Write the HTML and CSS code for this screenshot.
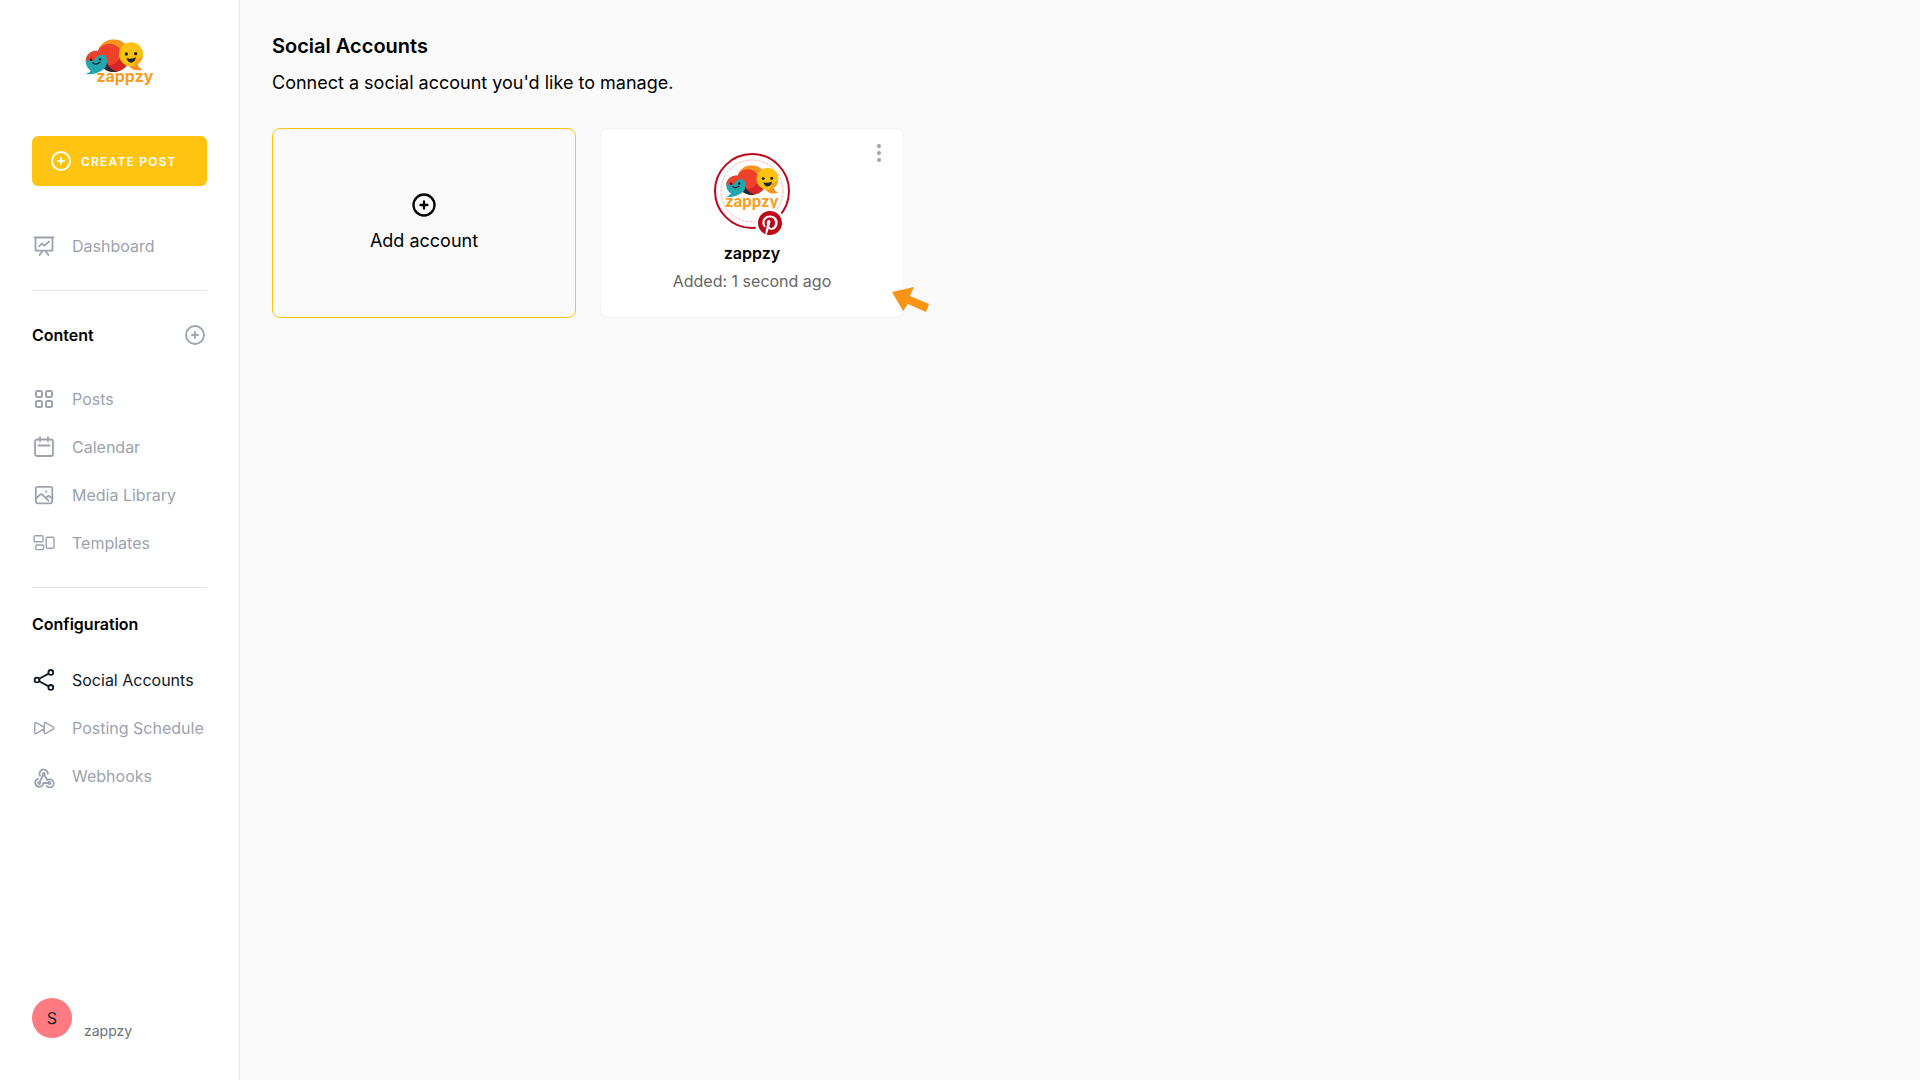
FILE: index.html
```html
<!DOCTYPE html>
<html lang="en">
<head>
  <meta charset="UTF-8">
  <meta name="viewport" content="width=device-width, initial-scale=1.0">
  <title>Social Accounts - zappzy</title>
  <link rel="stylesheet" href="styles.css">
</head>
<body>
  <svg class="sprite" aria-hidden="true">
    <symbol id="plus-circle" viewBox="0 0 24 24">
      <circle cx="12" cy="12" r="9"/>
      <path d="M12 9v6M9 12h6"/>
    </symbol>
    <symbol id="bubbles" viewBox="0 0 180 112">
      <clipPath id="big"><circle cx="89" cy="53" r="49"/></clipPath>
      <clipPath id="teal"><circle cx="37" cy="70" r="32"/></clipPath>
      <clipPath id="yellow"><circle cx="141" cy="49" r="36"/></clipPath>
      <g clip-path="url(#big)">
        <rect x="40" y="4" width="100" height="100" fill="#f7941d"/>
        <circle cx="76" cy="56" r="39" fill="#ef4129"/>
        <path d="M66 84q38-2 44-32l34 6v54H60z" fill="#d9242a"/>
        <path d="M62 58q10 38 38 43l-8 11H48V84z" fill="#272a33"/>
      </g>
      <path d="M60 84q-6 20-34 24-11 2-21-1 13-2 16-12z" fill="#22a6b0"/>
      <g clip-path="url(#teal)">
        <rect x="4" y="36" width="70" height="70" fill="#22a6b0"/>
        <path d="M4 68h26q7-20 34-17V36H4z" fill="#ef4129"/>
      </g>
      <path d="M134 82q9 20 43 13-14-3-16-20z" fill="#f7941d"/>
      <g clip-path="url(#yellow)">
        <rect x="104" y="12" width="74" height="74" fill="#fec20f"/>
        <path d="M178 50q-5 12-22 12-2 14-12 25h34z" fill="#f7a41d"/>
      </g>
      <g fill="#20242c">
        <circle cx="21" cy="65" r="4"/>
        <circle cx="48" cy="64" r="4"/>
        <circle cx="127" cy="48" r="5"/>
        <circle cx="155" cy="47" r="5"/>
        <path d="M127 60q14 5 29-2-2 15-14 16-11 0-15-14z"/>
      </g>
      <path d="M26 74q10 9 21-1" fill="none" stroke="#20242c" stroke-width="4" stroke-linecap="round"/>
    </symbol>
  </svg>

  <div class="app">
    <aside class="sidebar">
      <a href="#" class="logo" aria-label="Home">
        <svg viewBox="0 0 216 150">
          <use href="#bubbles" width="180" height="112"/>
          <text x="37" y="133" class="logo-text">zappzy</text>
        </svg>
      </a>

      <button type="button" class="create-post">
        <svg class="icon bold"><use href="#plus-circle"/></svg>
        Create post
      </button>

      <nav class="nav">
        <a href="#" class="nav-link">
          <svg class="icon" viewBox="0 0 24 24"><path d="M2.5 3.5h19M3.5 3.5v13.2h17V3.5M10.5 17l-3 4M13.5 17l3 4M7 12.5l2.8-3 2.7 2.2 4.5-4.2"/></svg>
          Dashboard
        </a>
      </nav>

      <hr class="divider">

      <div class="nav-heading">
        <h2>Content</h2>
        <button type="button" class="heading-add" aria-label="Add content">
          <svg class="icon"><use href="#plus-circle"/></svg>
        </button>
      </div>
      <nav class="nav">
        <a href="#" class="nav-link">
          <svg class="icon bold" viewBox="0 0 24 24"><rect x="4" y="4" width="6" height="6" rx="1.5"/><rect x="14" y="4" width="6" height="6" rx="1.5"/><rect x="4" y="14" width="6" height="6" rx="1.5"/><rect x="14" y="14" width="6" height="6" rx="1.5"/></svg>
          Posts
        </a>
        <a href="#" class="nav-link">
          <svg class="icon" viewBox="0 0 24 24"><rect x="3" y="4.5" width="18" height="16.5" rx="2"/><path d="M8 2.2v4M16 2.2v4M6.5 10.5h11"/></svg>
          Calendar
        </a>
        <a href="#" class="nav-link">
          <svg class="icon" viewBox="0 0 24 24"><rect x="3.8" y="3.8" width="16.5" height="16.5" rx="2"/><path d="M4 15.5l3.8-3.6q1.4-1.2 2.8 0l6 6M14 14.8l1.2-1.2q1.4-1.2 2.8 0l2.3 2.2M14 8.5h.4"/></svg>
          Media Library
        </a>
        <a href="#" class="nav-link">
          <svg class="icon thin" viewBox="0 0 24 24"><rect x="2.2" y="4.8" width="8.8" height="6" rx="1"/><rect x="3.8" y="14" width="7.8" height="4.6" rx="1"/><rect x="14.2" y="6.2" width="7.8" height="11" rx="1"/></svg>
          Templates
        </a>
      </nav>

      <hr class="divider">

      <div class="nav-heading short">
        <h2>Configuration</h2>
      </div>
      <nav class="nav">
        <a href="#" class="nav-link active">
          <svg class="icon" viewBox="0 0 24 24"><circle cx="5" cy="12" r="2.4"/><circle cx="18.8" cy="4.4" r="2.4"/><circle cx="18.8" cy="19.4" r="2.4"/><path d="M7.2 10.8l9.4-5.2M7.2 13.2l9.4 5.2"/></svg>
          Social Accounts
        </a>
        <a href="#" class="nav-link">
          <svg class="icon thin" viewBox="0 0 24 24"><path d="M2.8 7.8q0-1.8 1.6-1l7.3 4q1.6 1.2 0 2.4l-7.3 4.2q-1.6.8-1.6-1zM12.3 7.8q0-1.8 1.6-1l7.3 4q1.6 1.2 0 2.4l-7.3 4.2q-1.6.8-1.6-1z"/></svg>
          Posting Schedule
        </a>
        <a href="#" class="nav-link">
          <svg class="icon" viewBox="0 0 24 24"><path d="M8 11.8a4.2 4.2 0 1 1 7.9-2M11.8 10l-4.4 8.3M11.8 10l3.6 6.2a4 4 0 1 1-.6 6M17.4 19h-6.2a4 4 0 1 1-5-4.1"/><circle cx="11.8" cy="10" r="1"/><circle cx="7.2" cy="19" r="1"/><circle cx="17.4" cy="19" r="1"/></svg>
          Webhooks
        </a>
      </nav>

      <div class="user">
        <span class="user-avatar">S</span>
        <span class="user-name">zappzy</span>
      </div>
    </aside>

    <main class="content">
      <h1>Social Accounts</h1>
      <p class="intro">Connect a social account you'd like to manage.</p>

      <div class="accounts">
        <button type="button" class="card add-account">
          <svg class="icon large bold"><use href="#plus-circle"/></svg>
          Add account
        </button>

        <article class="card account">
          <button type="button" class="card-menu" aria-label="Account options">
            <svg viewBox="0 0 24 24"><circle cx="12" cy="5" r="2"/><circle cx="12" cy="12" r="2"/><circle cx="12" cy="19" r="2"/></svg>
          </button>
          <div class="account-avatar">
            <svg class="account-picture" viewBox="0 0 64 64">
              <clipPath id="round"><circle cx="32" cy="32" r="32"/></clipPath>
              <circle cx="32" cy="32" r="31" fill="none" stroke="#f3b6bf" stroke-dasharray="3 1"/>
              <g clip-path="url(#round)">
                <use href="#bubbles" x="4" y="5" width="56" height="34"/>
                <text x="5" y="48" class="picture-text">zappzy</text>
              </g>
            </svg>
            <span class="network">
              <svg viewBox="0 0 24 24"><path fill="#bd081c" d="M12 0C5.373 0 0 5.372 0 12c0 5.084 3.163 9.426 7.627 11.174-.105-.949-.2-2.405.042-3.441.218-.937 1.407-5.965 1.407-5.965s-.359-.719-.359-1.782c0-1.668.967-2.914 2.171-2.914 1.023 0 1.518.769 1.518 1.69 0 1.029-.655 2.568-.994 3.995-.283 1.194.599 2.169 1.777 2.169 2.133 0 3.772-2.249 3.772-5.495 0-2.873-2.064-4.882-5.012-4.882-3.414 0-5.418 2.561-5.418 5.207 0 1.031.397 2.138.893 2.738a.36.36 0 0 1 .083.345l-.333 1.36c-.053.22-.174.267-.402.161-1.499-.698-2.436-2.889-2.436-4.649 0-3.785 2.75-7.262 7.929-7.262 4.163 0 7.398 2.967 7.398 6.931 0 4.136-2.607 7.464-6.227 7.464-1.216 0-2.359-.631-2.75-1.378l-.748 2.853c-.271 1.043-1.002 2.35-1.492 3.146C9.57 23.812 10.763 24 12 24c6.627 0 12-5.373 12-12 0-6.628-5.373-12-12-12z"/></svg>
            </span>
          </div>
          <h3>zappzy</h3>
          <p class="added">Added: 1 second ago</p>
          <svg class="pointer" viewBox="0 0 38 26" aria-hidden="true"><path fill="#f99415" d="M0 5L22 0l-4 9 19 8-3 8-18-8-5 7z"/></svg>
        </article>
      </div>
    </main>
  </div>
</body>
</html>
```

FILE: styles.css
```css
* {
  box-sizing: border-box;
}
body {
  margin: 0;
  font-family: Inter, "Liberation Sans", sans-serif;
  font-size: 16px;
  line-height: 24px;
  color: #000;
  background-color: #fafafa;
}
h1, h2, h3, p {
  margin: 0;
}
button {
  font-family: inherit;
  color: inherit;
  cursor: pointer;
}
.sprite {
  position: absolute;
  width: 0;
  height: 0;
}
.app {
  display: flex;
  min-height: 100vh;
}

/* icons */
.icon {
  flex: none;
  width: 24px;
  height: 24px;
  fill: none;
  stroke: currentColor;
  stroke-width: 1.8;
  stroke-linecap: round;
  stroke-linejoin: round;
}
.icon.bold {
  stroke-width: 2;
}
.icon.thin {
  stroke-width: 1.4;
}
.icon.large {
  width: 28px;
  height: 28px;
}

/* sidebar */
.sidebar {
  flex: none;
  display: flex;
  flex-direction: column;
  width: 240px;
  padding: 38px 32px 42px;
  background-color: #fff;
  border-right: 1px solid #e5e5e5;
}
.logo {
  align-self: center;
  width: 72px;
  height: 50px;
  margin-bottom: 48px;
}
.logo svg {
  display: block;
  width: 100%;
  height: 100%;
  overflow: visible;
}
.logo-text,
.picture-text {
  font-weight: 700;
  fill: #f99d1c;
}
.logo-text {
  font-size: 48px;
}
.picture-text {
  font-size: 15px;
}
.create-post {
  display: flex;
  align-items: center;
  gap: 8px;
  height: 50px;
  padding: 0 17px;
  border: 0;
  border-radius: 6px;
  background-color: #ffc412;
  color: #fff;
  font-size: 12px;
  font-weight: 600;
  letter-spacing: 0.1em;
  text-transform: uppercase;
  margin-bottom: 36px;
}
.nav-link {
  display: flex;
  align-items: center;
  gap: 16px;
  padding: 12px 0;
  color: #9ca3af;
  text-decoration: none;
  white-space: nowrap;
}
.nav-link:hover,
.nav-link.active {
  color: #111827;
}
.divider {
  width: 100%;
  margin: 20px 0 24px;
  border: 0;
  border-top: 1px solid #e5e5e5;
}
.nav-heading {
  display: flex;
  align-items: center;
  justify-content: space-between;
  min-height: 40px;
  margin-bottom: 20px;
}
.nav-heading.short {
  min-height: 24px;
}
.nav-heading h2 {
  font-size: 16px;
  font-weight: 600;
}
.heading-add {
  display: flex;
  padding: 0;
  border: 0;
  background: none;
  color: #9ca3af;
}
.user {
  display: flex;
  align-items: flex-end;
  gap: 12px;
  margin-top: auto;
}
.user-avatar {
  display: flex;
  align-items: center;
  justify-content: center;
  width: 40px;
  height: 40px;
  border-radius: 50%;
  background-color: #ff7b81;
  color: #1f1f2b;
}
.user-name {
  font-size: 14px;
  line-height: 14px;
  color: #6b7280;
}

/* content */
.content {
  flex: 1;
  padding: 32px;
}
.content h1 {
  font-size: 20px;
  line-height: 28px;
  font-weight: 600;
}
.intro {
  margin: 9px 0 31px;
  font-size: 18px;
  line-height: 28px;
}
.accounts {
  display: grid;
  grid-template-columns: repeat(5, 1fr);
  gap: 24px;
}
.card {
  display: flex;
  flex-direction: column;
  align-items: center;
  padding: 24px;
  border: 1px solid #f3f4f6;
  border-radius: 8px;
}
.add-account {
  justify-content: center;
  gap: 8px;
  border-color: #ffc412;
  background: none;
  font-size: 18px;
  line-height: 28px;
}
.account {
  position: relative;
  background-color: #fff;
}
.card-menu {
  position: absolute;
  top: 12px;
  right: 12px;
  padding: 0;
  border: 0;
  background: none;
}
.card-menu svg {
  display: block;
  width: 24px;
  height: 24px;
  fill: #9ca3af;
}
.account-avatar {
  position: relative;
  display: flex;
  align-items: center;
  justify-content: center;
  width: 76px;
  height: 76px;
  border: 2px solid #bd081c;
  border-radius: 50%;
  margin-bottom: 12px;
}
.account-picture {
  width: 64px;
  height: 64px;
}
.network {
  position: absolute;
  right: 3px;
  bottom: -11px;
  padding: 3px;
  border-radius: 50%;
  background-color: #fff;
}
.network svg {
  display: block;
  width: 24px;
  height: 24px;
}
.account h3 {
  font-size: 16px;
  font-weight: 600;
  margin-bottom: 4px;
}
.added {
  color: #666;
}
.pointer {
  position: absolute;
  right: -27px;
  bottom: 4px;
  width: 38px;
  height: 26px;
}
```
